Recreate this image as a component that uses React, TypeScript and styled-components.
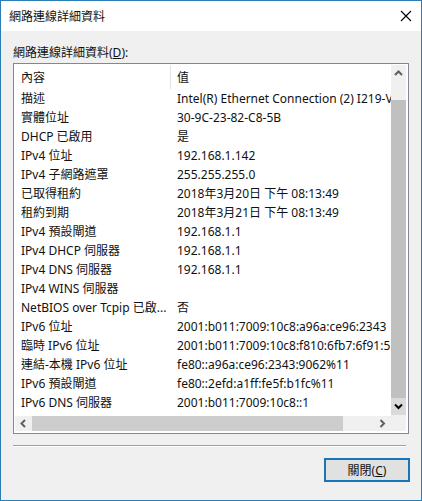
import React from "react";
import styled, { createGlobalStyle } from "styled-components";

const GlobalStyle = createGlobalStyle`
  * { box-sizing: border-box; }
  body {
    margin: 0;
    color: #111;
    font-family: "Noto Sans", "Noto Sans CJK TC", sans-serif;
    font-size: 12px;
    line-height: 19px;
  }
`;

const Dialog = styled.main`
  display: flex;
  flex-direction: column;
  min-height: 100vh;
  background: #f0f0f0;
  border: 1px solid #2a7db5;
`;

const TitleBar = styled.header`
  display: flex;
  align-items: center;
  justify-content: space-between;
  height: 30px;
  padding-left: 8px;
  background: #fff;
`;

const Title = styled.h1`
  margin: 0;
  font-size: 12px;
  font-weight: 400;
`;

const CloseIconButton = styled.button`
  display: grid;
  place-items: center;
  width: 30px;
  height: 30px;
  padding: 0;
  border: 0;
  background: transparent;
`;

const Content = styled.section`
  display: flex;
  flex: 1;
  flex-direction: column;
  padding: 12px 12px 0;
`;

const ListLabel = styled.div`
  height: 20px;
`;

const ListBox = styled.div`
  display: grid;
  grid-template-columns: minmax(0, 1fr) 15px;
  grid-template-rows: auto 15px;
  padding: 1px 2px 2px 1px;
  background: #fff;
  border: 1px solid #828790;
`;

const TableView = styled.div`
  overflow: hidden;
  padding-bottom: 4px;
`;

const Table = styled.table`
  width: 100%;
  table-layout: fixed;
  border-collapse: separate;
  border-spacing: 0;
`;

const HeaderCell = styled.th<{ $name?: boolean }>`
  width: ${(p) => (p.$name ? "156px" : "auto")};
  height: 24px;
  padding: 0 0 0 6px;
  border-right: ${(p) => (p.$name ? "1px solid #e2e2e2" : "0")};
  font-weight: 400;
  text-align: left;
`;

const NameCell = styled.th`
  height: 19px;
  padding: 0 3px 0 6px;
  overflow: hidden;
  font-weight: 400;
  text-align: left;
  text-overflow: ellipsis;
  white-space: nowrap;
`;

const ValueCell = styled.td`
  height: 19px;
  padding: 0 0 0 6px;
  overflow: hidden;
  white-space: nowrap;
`;

const ScrollBar = styled.div<{ $vertical?: boolean }>`
  display: flex;
  flex-direction: ${(p) => (p.$vertical ? "column" : "row")};
  background: #f0f0f0;
  padding-bottom: ${(p) => (p.$vertical ? "1px" : "0")};
`;

const Track = styled.div<{ $vertical?: boolean }>`
  display: flex;
  flex: 1;
  flex-direction: ${(p) => (p.$vertical ? "column" : "row")};
  padding-top: ${(p) => (p.$vertical ? "18px" : "0")};
`;

const Thumb = styled.div<{ $share: string; $color: string }>`
  flex: 0 0 ${(p) => p.$share};
  background: ${(p) => p.$color};
`;

const ArrowButton = styled.button<{ $shaded?: boolean }>`
  display: grid;
  flex: 0 0 17px;
  place-items: center;
  padding: 0;
  border: 0;
  background: ${(p) => (p.$shaded ? "#dadada" : "#f0f0f0")};
`;

const Corner = styled.div`
  background: #f0f0f0;
`;

const Separator = styled.hr`
  width: calc(100% - 3px);
  height: 2px;
  margin: 11px 0 0;
  border: 0;
  border-top: 1px solid #a0a0a0;
  border-bottom: 1px solid #fff;
`;

const Actions = styled.footer`
  display: flex;
  justify-content: flex-end;
  padding: 11px 0 18px;
  margin-right: -1px;
`;

const CloseButton = styled.button`
  width: 86px;
  height: 24px;
  padding: 0;
  border: 2px solid #1a74b8;
  background: #e1e1e1;
  color: inherit;
  font: inherit;
`;

const paths = {
  up: "M1 6 4.5 2.5 8 6",
  down: "M1 2.5 4.5 6 8 2.5",
  left: "M6 1 2.5 4.5 6 8",
  right: "M2.5 1 6 4.5 2.5 8",
};

function Chevron({ dir, color = "#606060" }: { dir: keyof typeof paths; color?: string }) {
  return (
    <svg width="9" height="9" viewBox="0 0 9 9" aria-hidden="true">
      <path d={paths[dir]} fill="none" stroke={color} strokeWidth="2" />
    </svg>
  );
}

const details = [
  ["描述", "Intel(R) Ethernet Connection (2) I219-V"],
  ["實體位址", "30-9C-23-82-C8-5B"],
  ["DHCP 已啟用", "是"],
  ["IPv4 位址", "192.168.1.142"],
  ["IPv4 子網路遮罩", "255.255.255.0"],
  ["已取得租約", "2018年3月20日 下午 08:13:49"],
  ["租約到期", "2018年3月21日 下午 08:13:49"],
  ["IPv4 預設閘道", "192.168.1.1"],
  ["IPv4 DHCP 伺服器", "192.168.1.1"],
  ["IPv4 DNS 伺服器", "192.168.1.1"],
  ["IPv4 WINS 伺服器", ""],
  ["NetBIOS over Tcpip 已啟...", "否"],
  ["IPv6 位址", "2001:b011:7009:10c8:a96a:ce96:2343"],
  ["臨時 IPv6 位址", "2001:b011:7009:10c8:f810:6fb7:6f91:5"],
  ["連結-本機 IPv6 位址", "fe80::a96a:ce96:2343:9062%11"],
  ["IPv6 預設閘道", "fe80::2efd:a1ff:fe5f:b1fc%11"],
  ["IPv6 DNS 伺服器", "2001:b011:7009:10c8::1"],
];

export default function App() {
  return (
    <>
      <GlobalStyle />
      <Dialog>
        <TitleBar>
          <Title>網路連線詳細資料</Title>
          <CloseIconButton aria-label="關閉視窗">
            <svg width="12" height="12" viewBox="0 0 12 12" aria-hidden="true">
              <path d="M1 1 11 11M11 1 1 11" stroke="#000" strokeWidth="1.1" />
            </svg>
          </CloseIconButton>
        </TitleBar>
        <Content>
          <ListLabel id="details-label">
            網路連線詳細資料(<u>D</u>):
          </ListLabel>
          <ListBox>
            <TableView>
              <Table aria-labelledby="details-label">
                <thead>
                  <tr>
                    <HeaderCell $name scope="col">內容</HeaderCell>
                    <HeaderCell scope="col">值</HeaderCell>
                  </tr>
                </thead>
                <tbody>
                  {details.map(([name, value]) => (
                    <tr key={name}>
                      <NameCell scope="row">{name}</NameCell>
                      <ValueCell>{value}</ValueCell>
                    </tr>
                  ))}
                </tbody>
              </Table>
            </TableView>
            <ScrollBar $vertical>
              <ArrowButton aria-label="向上捲動"><Chevron dir="up" /></ArrowButton>
              <Track $vertical><Thumb $share="100%" $color="#c0c0c0" /></Track>
              <ArrowButton $shaded aria-label="向下捲動"><Chevron dir="down" color="#000" /></ArrowButton>
            </ScrollBar>
            <ScrollBar>
              <ArrowButton aria-label="向左捲動"><Chevron dir="left" /></ArrowButton>
              <Track><Thumb $share="91%" $color="#cdcdcd" /></Track>
              <ArrowButton aria-label="向右捲動"><Chevron dir="right" /></ArrowButton>
            </ScrollBar>
            <Corner />
          </ListBox>
          <Separator />
          <Actions>
            <CloseButton>關閉(<u>C</u>)</CloseButton>
          </Actions>
        </Content>
      </Dialog>
    </>
  );
}
